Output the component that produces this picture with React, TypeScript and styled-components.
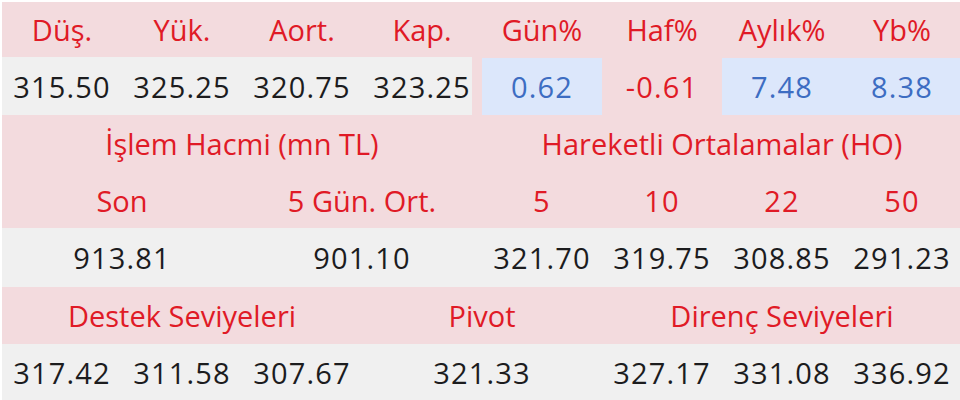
import React from "react";
import styled, { createGlobalStyle } from "styled-components";

const PINK = "#f3dbde";
const GRAY = "#f0f0f0";
const BLUE = "#dce7fb";
const RED = "#e01a26";
const BLUE_TEXT = "#3d6dc2";
const INK = "#1c1c1e";

const Global = createGlobalStyle`
  html, body { margin: 0; padding: 0; background: #ffffff; overflow: hidden; }
  body { width: 960px; height: 400px; }
`;

const Page = styled.div`
  padding: 2px 0 0 2px;
  width: 960px;
  height: 400px;
  box-sizing: border-box;
  overflow: hidden;
`;

const Table = styled.div`
  display: grid;
  grid-template-columns: repeat(8, 120px);
  grid-template-rows: 55px 58px 57px 56px 59px 57px 56px;
  width: 960px;
  background: ${PINK};
  font-family: "Open Sans", "Noto Sans", sans-serif;
  font-size: 29px;
  line-height: 1;
`;

type Tone = "head" | "plain" | "pos" | "neg";

const bgFor = (t: Tone) =>
  t === "plain" ? GRAY : t === "pos" ? BLUE : "transparent";
const colorFor = (t: Tone) =>
  t === "plain" ? INK : t === "pos" ? BLUE_TEXT : RED;

const Cell = styled.div<{ $tone: Tone; $span?: number; $trim?: number; $top?: number; $num?: boolean }>`
  grid-column: span ${(p) => p.$span ?? 1};
  display: flex;
  align-items: center;
  justify-content: center;
  white-space: nowrap;
  color: ${(p) => colorFor(p.$tone)};
  letter-spacing: ${(p) => (p.$num ? "1.2px" : "0")};
  font-weight: ${(p) => (p.$tone === "plain" ? 500 : 400)};
  background: ${(p) =>
    p.$trim
      ? `linear-gradient(to right, ${bgFor(p.$tone)} calc(100% - ${p.$trim}px), transparent 0)`
      : bgFor(p.$tone)};
  background-clip: ${(p) => (p.$top ? "content-box" : "border-box")};
  padding-top: ${(p) => p.$top ?? 0}px;
  box-sizing: border-box;
`;

type C = { text: string; tone: Tone; span?: number; trim?: number; top?: number };

const rows: C[][] = [
  ["Düş.", "Yük.", "Aort.", "Kap.", "Gün%", "Haf%", "Aylık%", "Yb%"].map((t) => ({ text: t, tone: "head" as Tone })),
  [
    { text: "315.50", tone: "plain" },
    { text: "325.25", tone: "plain" },
    { text: "320.75", tone: "plain" },
    { text: "323.25", tone: "plain", trim: 10 },
    { text: "0.62", tone: "pos", top: 1 },
    { text: "-0.61", tone: "neg" },
    { text: "7.48", tone: "pos", top: 1 },
    { text: "8.38", tone: "pos", top: 1 },
  ],
  [
    { text: "İşlem Hacmi (mn TL)", tone: "head", span: 4 },
    { text: "Hareketli Ortalamalar (HO)", tone: "head", span: 4 },
  ],
  [
    { text: "Son", tone: "head", span: 2 },
    { text: "5 Gün. Ort.", tone: "head", span: 2 },
    { text: "5", tone: "head" },
    { text: "10", tone: "head" },
    { text: "22", tone: "head" },
    { text: "50", tone: "head" },
  ],
  [
    { text: "913.81", tone: "plain", span: 2 },
    { text: "901.10", tone: "plain", span: 2 },
    { text: "321.70", tone: "plain" },
    { text: "319.75", tone: "plain" },
    { text: "308.85", tone: "plain" },
    { text: "291.23", tone: "plain" },
  ],
  [
    { text: "Destek Seviyeleri", tone: "head", span: 3 },
    { text: "Pivot", tone: "head", span: 2 },
    { text: "Direnç Seviyeleri", tone: "head", span: 3 },
  ],
  [
    { text: "317.42", tone: "plain" },
    { text: "311.58", tone: "plain" },
    { text: "307.67", tone: "plain" },
    { text: "321.33", tone: "plain", span: 2 },
    { text: "327.17", tone: "plain" },
    { text: "331.08", tone: "plain" },
    { text: "336.92", tone: "plain" },
  ],
];

const isNum = (s: string) => /^-?[\d.]+$/.test(s);

export default function App() {
  return (
    <>
      <Global />
      <Page>
        <Table>
          {rows.map((r, i) =>
            r.map((c, j) => (
              <Cell
                key={`${i}-${j}`}
                $tone={c.tone}
                $span={c.span}
                $trim={c.trim}
                $top={c.top}
                $num={isNum(c.text)}
              >
                <span>{c.text}</span>
              </Cell>
            ))
          )}
        </Table>
      </Page>
    </>
  );
}
